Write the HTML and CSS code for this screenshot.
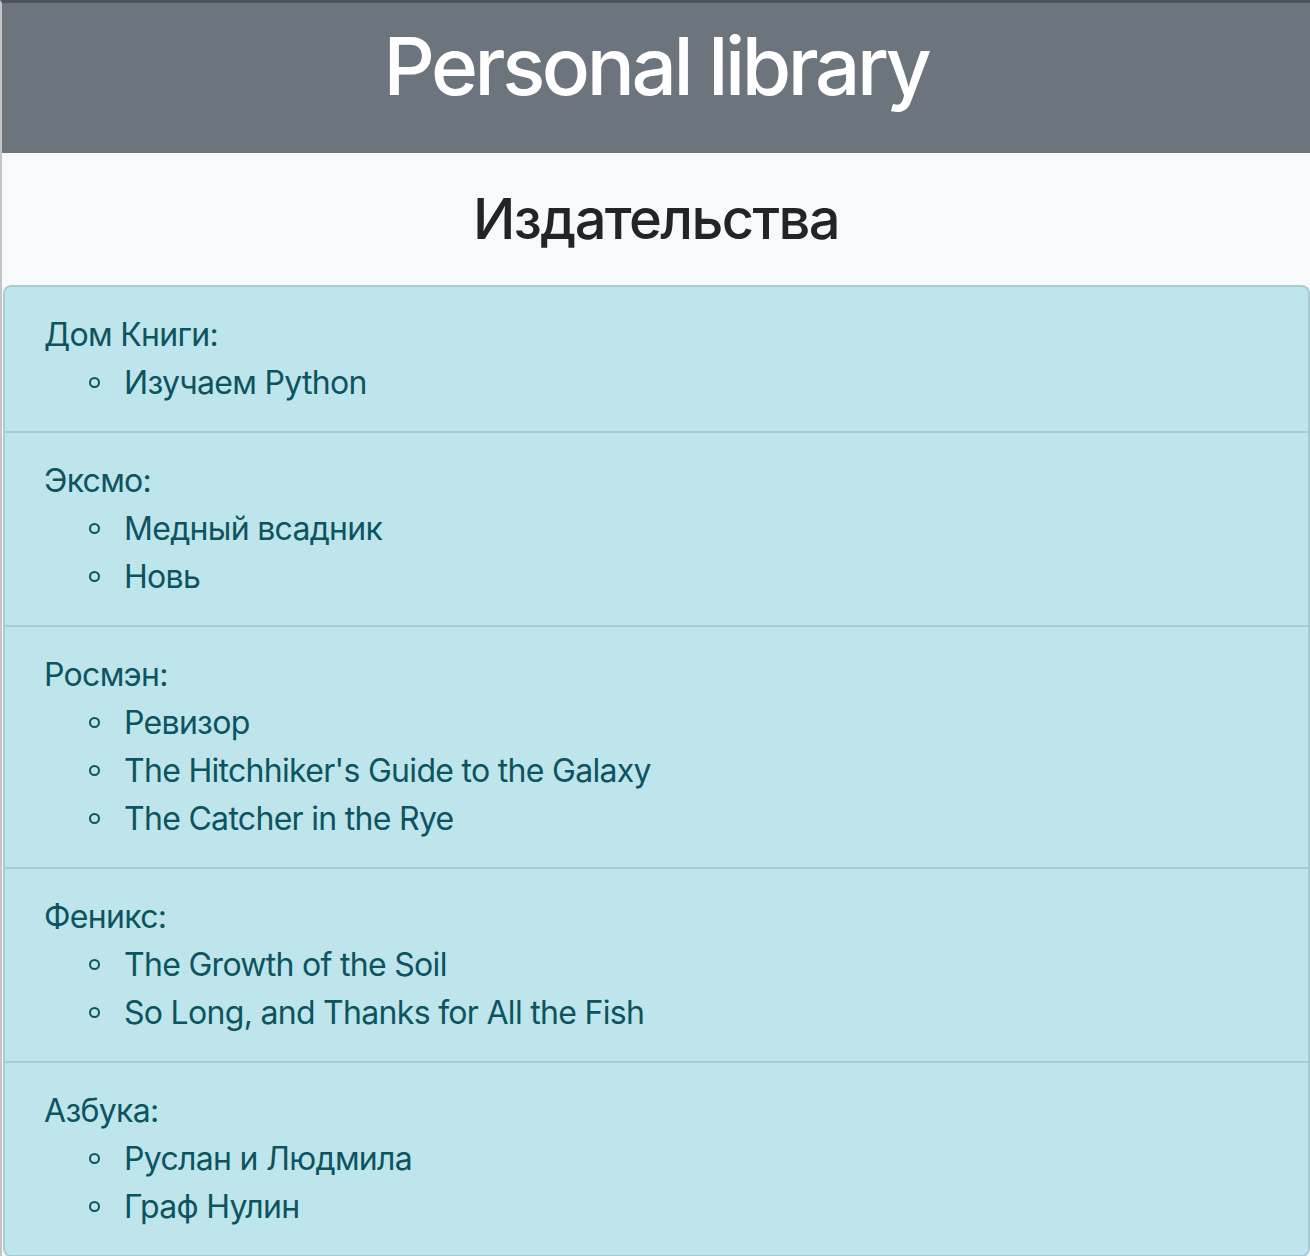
FILE: index.html
```html
<!DOCTYPE html>
<html lang="ru">
<head>
<meta charset="utf-8">
<title>Personal library</title>
<link rel="stylesheet" href="styles.css">
</head>
<body>
<div class="window">
  <header class="site-header">
    <h1 class="site-title">Personal library</h1>
  </header>
  <section class="section-head">
    <h3 class="section-title">Издательства</h3>
  </section>
  <ul class="publishers">
    <li class="publisher">
      <div class="publisher-name">Дом Книги:</div>
      <ul class="books">
        <li>Изучаем Python</li>
      </ul>
    </li>
    <li class="publisher">
      <div class="publisher-name">Эксмо:</div>
      <ul class="books">
        <li>Медный всадник</li>
        <li>Новь</li>
      </ul>
    </li>
    <li class="publisher">
      <div class="publisher-name">Росмэн:</div>
      <ul class="books">
        <li>Ревизор</li>
        <li>The Hitchhiker's Guide to the Galaxy</li>
        <li>The Catcher in the Rye</li>
      </ul>
    </li>
    <li class="publisher">
      <div class="publisher-name">Феникс:</div>
      <ul class="books">
        <li>The Growth of the Soil</li>
        <li>So Long, and Thanks for All the Fish</li>
      </ul>
    </li>
    <li class="publisher">
      <div class="publisher-name">Азбука:</div>
      <ul class="books">
        <li>Руслан и Людмила</li>
        <li>Граф Нулин</li>
      </ul>
    </li>
  </ul>
</div>
</body>
</html>
```

FILE: styles.css
```css
html, body {
  margin: 0;
  padding: 0;
}
body {
  background: #f8f9fa;
  font-family: Inter, "Noto Sans", sans-serif;
  overflow: hidden;
}
.window {
  border-top: 3px solid #4f5358;
  border-left: 2px solid #c4c4c6;
  min-height: 1253px;
  background: #f8f9fa;
}
.site-header {
  background: #6c757d;
  height: 150px;
  box-sizing: border-box;
  padding-top: 15px;
  text-align: center;
}
.site-title {
  margin: 0;
  color: #ffffff;
  font-size: 80px;
  font-weight: 500;
  line-height: 96px;
  letter-spacing: -3.4px;
}
.section-head {
  height: 132px;
  box-sizing: border-box;
  padding-top: 33px;
  text-align: center;
}
.section-title {
  margin: 0;
  color: #212529;
  font-size: 56px;
  font-weight: 500;
  line-height: 67px;
  letter-spacing: -1.6px;
}
.publishers {
  list-style: none;
  margin: 0 0 0 1px;
  padding: 0;
  border-radius: 8px;
  overflow: hidden;
}
.publisher {
  background: #bee5eb;
  color: #0c5460;
  border: 2px solid #a7cbd0;
  border-bottom: none;
  padding: 24px 39px;
  font-size: 32px;
  line-height: 48px;
  letter-spacing: -0.7px;
}
.publisher:first-child {
  border-radius: 8px 8px 0 0;
}
.publisher:last-child {
  border-bottom: 2px solid #a7cbd0;
  border-radius: 0 0 8px 8px;
}
.publisher-name {
  margin: 0;
}
.books {
  margin: 0;
  padding-left: 80px;
  list-style: none;
}
.books li::before {
  content: "";
  display: inline-block;
  box-sizing: border-box;
  width: 11px;
  height: 11px;
  border: 2px solid #0c5460;
  border-radius: 50%;
  margin-left: -35px;
  margin-right: 24px;
  vertical-align: 6px;
}
```
